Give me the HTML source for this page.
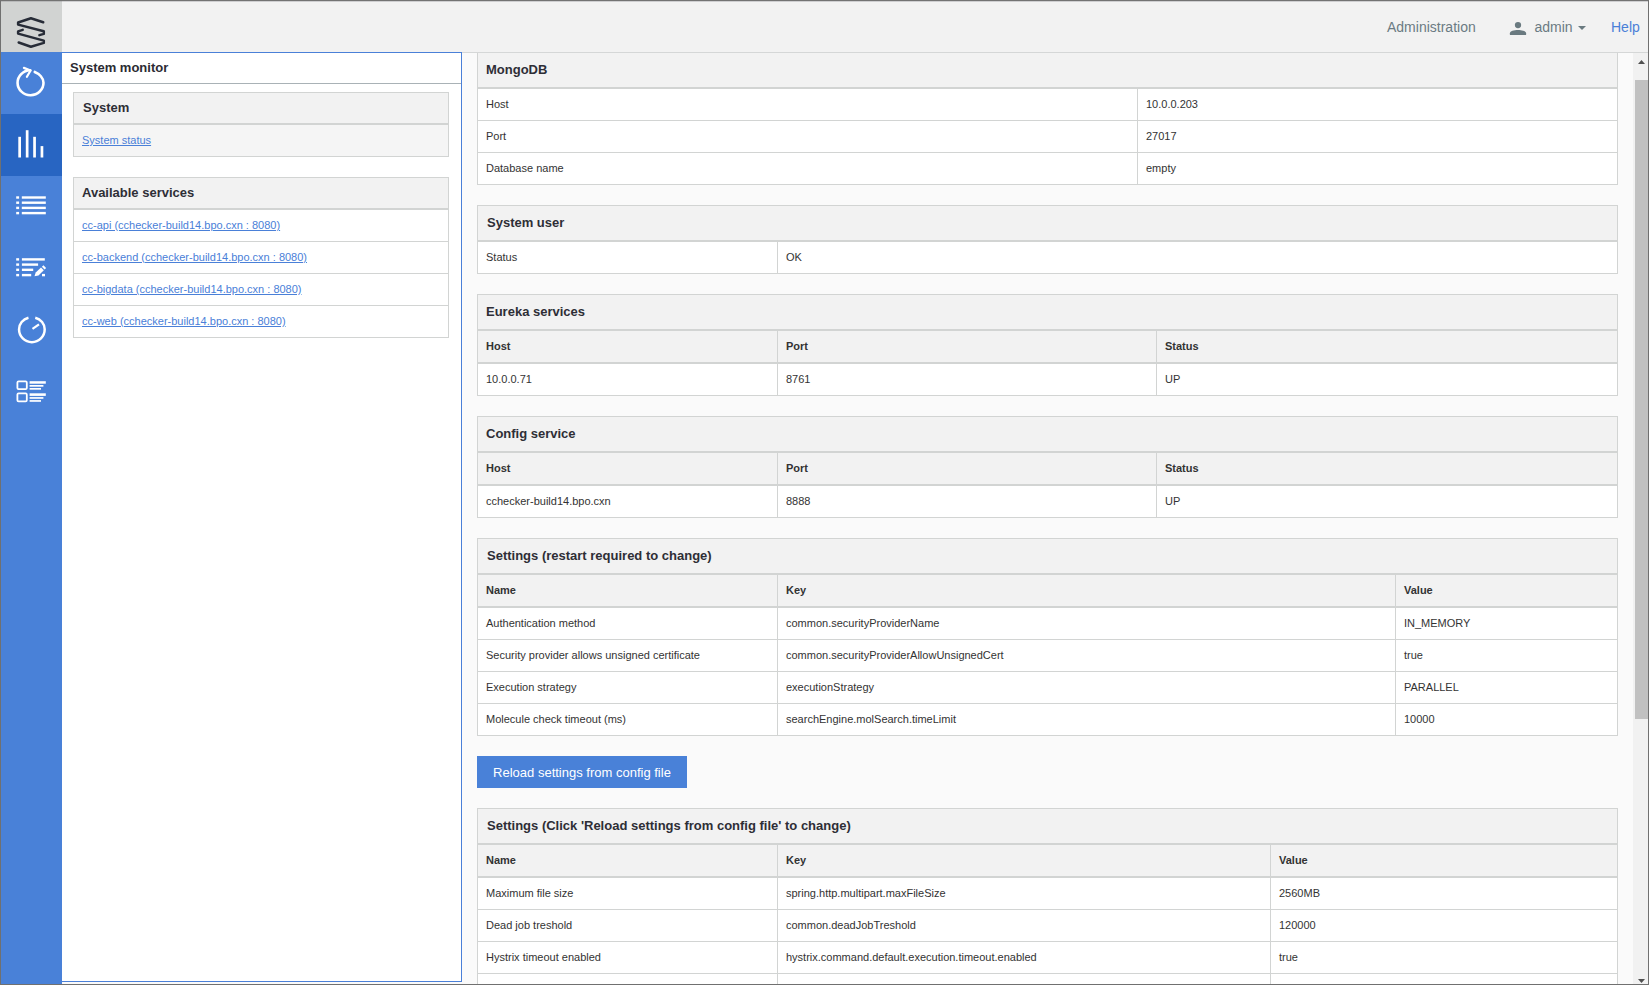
<!DOCTYPE html>
<html>
<head>
<meta charset="utf-8">
<title>System monitor</title>
<style>
*{box-sizing:border-box;margin:0;padding:0}
html,body{width:1649px;height:985px;overflow:hidden;background:#fafafa}
body{font-family:"Liberation Sans",sans-serif;font-size:11px;color:#333;position:relative}
#frame{position:absolute;left:0;top:0;width:1649px;height:985px;border:1px solid #707070;border-top-color:#737373;z-index:50;pointer-events:none}
#frame:before{content:"";position:absolute;left:0;top:0;width:1647px;height:1px;background:rgba(120,118,124,.28)}
#header{position:absolute;left:0;top:0;width:1649px;height:53px;background:#f2f2f2;border-bottom:1px solid #d5d7d7;z-index:10}
#logo{position:absolute;left:0;top:0;width:62px;height:52px;background:#d1d3d2;z-index:11}
#nav{position:absolute;top:2px;height:51px;line-height:51px;font-size:14px;color:#6b7b83;z-index:12;white-space:nowrap}
#sidebar{position:absolute;left:0;top:52px;width:62px;height:933px;background:#4981d8;z-index:11}
#sidebar .act{position:absolute;left:0;top:62px;width:62px;height:62px;background:#2865c2}
#icons{position:absolute;left:0;top:0;z-index:20}
#lpanel{position:absolute;left:62px;top:52px;width:400px;height:930px;background:#fff;border:1px solid #4a80d8;border-left:0;z-index:12}
#lpanel .ttl{height:31px;border-bottom:1px solid #a9b2b6;font-size:13px;font-weight:bold;line-height:30px;padding-left:8px;color:#2b2b33}
a{color:#4a80d8;text-decoration:underline}
.box{position:absolute;border:1px solid #d2d4d3;background:#fff}
.box .t{background:#f2f2f2;border-bottom:2px solid #d2d4d3;font-size:13px;font-weight:bold;padding-left:8px;color:#2e2e36;white-space:nowrap}
.lb .t{height:32px;line-height:30px}
.rb .t{height:36px;line-height:34px}
.r{display:flex;height:32px;line-height:31px;border-bottom:1px solid #d2d4d3;white-space:nowrap}
.r.h{height:33px;border-bottom-width:2px;background:#f2f2f2;font-weight:bold}
.r.last{height:31px;border-bottom:0}
.r>div{padding-left:8px;flex:none}
.r>div+div{border-left:1px solid #d2d4d3}
.r>div:last-child{flex:1}
.c1{width:299px}
#btn{position:absolute;left:477px;top:756px;width:210px;height:32px;background:#4981d8;color:#fff;font-size:13px;line-height:34px;text-align:center}
#sb{position:absolute;left:1633px;top:53px;width:15px;height:931px;background:#f1f1f1;z-index:5}
#sb .th{position:absolute;left:2px;top:27px;width:13px;height:639px;background:#c1c1c1}
</style>
</head>
<body>
<div id="header"></div>
<div id="logo"></div>
<div id="sidebar"><div class="act"></div></div>
<div id="nav" style="left:1387px">Administration</div>
<div id="nav2" style="position:absolute;left:1534.5px;top:2px;height:51px;line-height:51px;font-size:14px;color:#6b7b83;z-index:12">admin</div>
<div id="nav3" style="position:absolute;left:1611px;top:2px;height:51px;line-height:51px;font-size:14px;color:#4a80d8;z-index:12">Help</div>
<svg id="navic" width="100" height="52" viewBox="1500 0 100 52" style="position:absolute;left:1500px;top:0;z-index:12">
<circle cx="1518" cy="25.1" r="3.15" fill="#6a7a80"/>
<path d="M1509.9 35.1 V33.2 C1509.9 31.1 1514 29.95 1518 29.95 C1522 29.95 1526.1 31.1 1526.1 33.2 V35.1 Z" fill="#6a7a80"/>
<path d="M1578 26 H1586 L1582 30.1 Z" fill="#6a7a80"/>
</svg>
<div id="lpanel">
<div class="ttl">System monitor</div>
<div class="box lb" style="left:11px;top:39px;width:376px;height:65px;background:#f5f5f5">
<div class="t" style="padding-left:9px">System</div>
<div class="r last"><div><a>System status</a></div></div>
</div>
<div class="box lb" style="left:11px;top:124px;width:376px;height:161px">
<div class="t">Available services</div>
<div class="r"><div><a>cc-api (cchecker-build14.bpo.cxn : 8080)</a></div></div>
<div class="r"><div><a>cc-backend (cchecker-build14.bpo.cxn : 8080)</a></div></div>
<div class="r"><div><a>cc-bigdata (cchecker-build14.bpo.cxn : 8080)</a></div></div>
<div class="r last"><div><a>cc-web (cchecker-build14.bpo.cxn : 8080)</a></div></div>
</div>
</div>
<div class="box rb" style="left:477px;top:52px;width:1141px">
<div class="t">MongoDB</div>
<div class="r"><div style="width:659px">Host</div><div>10.0.0.203</div></div>
<div class="r"><div style="width:659px">Port</div><div>27017</div></div>
<div class="r last"><div style="width:659px">Database name</div><div>empty</div></div>
</div>
<div class="box rb" style="left:477px;top:205px;width:1141px">
<div class="t" style="padding-left:9px">System user</div>
<div class="r last"><div style="width:299px">Status</div><div>OK</div></div>
</div>
<div class="box rb" style="left:477px;top:294px;width:1141px">
<div class="t">Eureka services</div>
<div class="r h"><div style="width:299px">Host</div><div style="width:379px">Port</div><div>Status</div></div>
<div class="r last"><div style="width:299px">10.0.0.71</div><div style="width:379px">8761</div><div>UP</div></div>
</div>
<div class="box rb" style="left:477px;top:416px;width:1141px">
<div class="t">Config service</div>
<div class="r h"><div style="width:299px">Host</div><div style="width:379px">Port</div><div>Status</div></div>
<div class="r last"><div style="width:299px">cchecker-build14.bpo.cxn</div><div style="width:379px">8888</div><div>UP</div></div>
</div>
<div class="box rb" style="left:477px;top:538px;width:1141px">
<div class="t" style="padding-left:9px">Settings (restart required to change)</div>
<div class="r h"><div style="width:299px">Name</div><div style="width:618px">Key</div><div>Value</div></div>
<div class="r"><div style="width:299px">Authentication method</div><div style="width:618px">common.securityProviderName</div><div>IN_MEMORY</div></div>
<div class="r"><div style="width:299px">Security provider allows unsigned certificate</div><div style="width:618px">common.securityProviderAllowUnsignedCert</div><div>true</div></div>
<div class="r"><div style="width:299px">Execution strategy</div><div style="width:618px">executionStrategy</div><div>PARALLEL</div></div>
<div class="r last"><div style="width:299px">Molecule check timeout (ms)</div><div style="width:618px">searchEngine.molSearch.timeLimit</div><div>10000</div></div>
</div>
<div id="btn">Reload settings from config file</div>
<div class="box rb" style="left:477px;top:808px;width:1141px">
<div class="t" style="padding-left:9px">Settings (Click 'Reload settings from config file' to change)</div>
<div class="r h"><div style="width:299px">Name</div><div style="width:493px">Key</div><div>Value</div></div>
<div class="r"><div style="width:299px">Maximum file size</div><div style="width:493px">spring.http.multipart.maxFileSize</div><div>2560MB</div></div>
<div class="r"><div style="width:299px">Dead job treshold</div><div style="width:493px">common.deadJobTreshold</div><div>120000</div></div>
<div class="r"><div style="width:299px">Hystrix timeout enabled</div><div style="width:493px">hystrix.command.default.execution.timeout.enabled</div><div>true</div></div>
<div class="r"><div style="width:299px">&nbsp;</div><div style="width:493px">&nbsp;</div><div>&nbsp;</div></div>
<div class="r last"><div style="width:299px">&nbsp;</div><div style="width:493px">&nbsp;</div><div>&nbsp;</div></div>
</div>
<div id="sb"><div class="th"></div>
<svg width="15" height="931" style="position:absolute;left:0;top:0"><path d="M5 11 L8.5 7 L12 11 Z" fill="#505050"/><path d="M5 926 L12 926 L8.5 930 Z" fill="#505050"/></svg>
</div>
<svg id="icons" width="62" height="430" viewBox="0 0 62 430">
<g fill="none" stroke="#272c37" stroke-width="2.5" stroke-linejoin="round" stroke-linecap="round">
<path d="M43.2 22.3 L30.9 18.3 L18.1 22.5 L18.1 24.6 L43.8 31.3 L43.8 33.9 L39.4 35.1"/>
<path d="M22.7 29.9 L18.1 31.4 L18.1 33.6 L43.8 40.6 L43.8 42.9 L30.9 46.7 L18.7 42.5"/>
</g>
<!-- refresh -->
<g fill="none" stroke="#fff" stroke-width="2.6" stroke-linecap="round" stroke-linejoin="round">
<path d="M34.76 71.95 C39.38 73.89 43.5 78 43.5 82.75 A12.97 12.45 0 1 1 30.2 70.3"/>
<path d="M23.9 67.9 L30.6 70.5 L26.9 76.8" stroke-width="2.2"/>
</g>
<!-- bars -->
<g fill="#fff">
<rect x="18.3" y="136.8" width="2.7" height="20.7"/>
<rect x="25.8" y="130.2" width="2.7" height="27.3"/>
<rect x="33.2" y="136.8" width="2.7" height="20.7"/>
<rect x="40.6" y="146.1" width="2.7" height="11.4"/>
</g>
<!-- list -->
<g fill="#fff">
<rect x="16.2" y="196.3" width="2.9" height="2.4"/><rect x="21.8" y="196.3" width="24" height="2.4"/>
<rect x="16.2" y="201.5" width="2.9" height="2.4"/><rect x="21.8" y="201.5" width="24" height="2.4"/>
<rect x="16.2" y="206.7" width="2.9" height="2.4"/><rect x="21.8" y="206.7" width="24" height="2.4"/>
<rect x="16.2" y="211.9" width="2.9" height="2.4"/><rect x="21.8" y="211.9" width="24" height="2.4"/>
</g>
<!-- list edit -->
<g fill="#fff">
<rect x="16.2" y="258.2" width="2.9" height="2.4"/><rect x="21.9" y="258.2" width="22.9" height="2.4"/>
<rect x="16.2" y="263.4" width="2.9" height="2.4"/><rect x="21.9" y="263.4" width="16.2" height="2.4"/>
<rect x="16.2" y="268.6" width="2.9" height="2.4"/><rect x="21.9" y="268.6" width="11.3" height="2.4"/>
<rect x="16.2" y="273.9" width="2.9" height="2.4"/><rect x="21.9" y="273.9" width="9.3" height="2.4"/>
<rect x="42" y="273.9" width="3" height="2.4"/>
<path d="M34.5 276.2 L35.7 272.4 L41 267.4 L43.8 270.3 L38.5 275.4 Z"/>
<path d="M41.9 266.8 L43.5 265.3 L46.1 268 L44.6 269.6 Z"/>
</g>
<!-- gauge -->
<g fill="none" stroke="#fff">
<path d="M35.27 317.73 A12.83 12 0 0 1 44.7 329.3 A12.83 12.83 0 0 1 19.04 329.3 A12.83 12 0 0 1 28.47 317.73" stroke-width="2.5"/>
<path d="M32.5 328.9 L39 324.3" stroke-width="2.2"/>
</g>
<!-- cards -->
<g fill="none" stroke="#fff" stroke-width="1.8">
<rect x="17.4" y="381.3" width="9.4" height="7.8" rx="1.2"/>
<rect x="17.4" y="393.3" width="9.4" height="8.1" rx="1.2"/>
</g>
<g fill="#fff">
<rect x="29.6" y="381.2" width="16.2" height="2.5"/>
<rect x="29.6" y="385" width="13.8" height="1.7"/>
<rect x="29.6" y="388" width="11.4" height="1.7"/>
<rect x="29.6" y="393.3" width="16.2" height="2.6"/>
<rect x="29.6" y="397.1" width="13.8" height="1.7"/>
<rect x="29.6" y="400.1" width="11.4" height="1.7"/>
</g>
</svg>
<div id="frame"></div>
</body>
</html>
